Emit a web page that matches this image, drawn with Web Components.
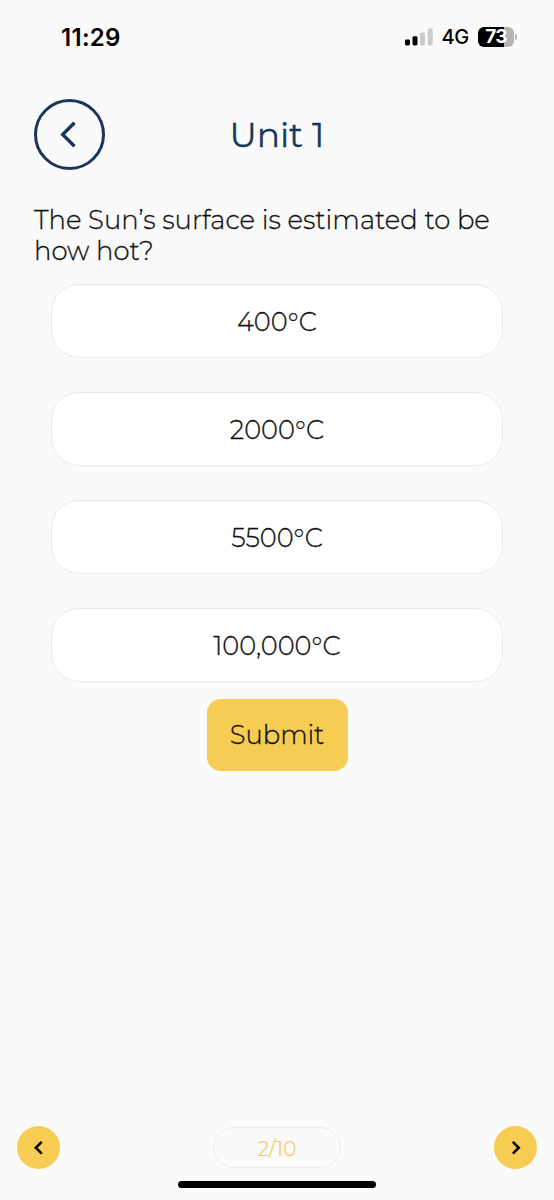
<!DOCTYPE html>
<html lang="en">
<head>
  <meta charset="utf-8">
  <meta name="viewport" content="width=device-width, initial-scale=1">
  <title>Unit 1</title>
  <style>
    body {
      margin: 0;
      background-color: #fafafa;
      font-family: Montserrat, Inter, "Open Sans", sans-serif;
    }
  </style>
</head>
<body>
  <quiz-screen></quiz-screen>

  <script>
    class StatusBar extends HTMLElement {
      constructor() {
        super();
        this.shadow = this.attachShadow({ mode: 'open' });
        this.shadow.innerHTML = `
          <style>
            :host {
              display: flex;
              align-items: center;
              justify-content: space-between;
              box-sizing: border-box;
              height: 74px;
              padding: 0 37px 0 61px;
              color: #000;
              font-family: Inter, "Open Sans", sans-serif;
            }
            .time {
              font-size: 24px;
              font-weight: 600;
              letter-spacing: 0.3px;
            }
            .right {
              display: flex;
              align-items: center;
            }
            .network {
              margin: 0 9px 0 9px;
              font-size: 20px;
              font-weight: 500;
              letter-spacing: -0.3px;
            }
            .battery {
              width: 36px;
              height: 20px;
              border-radius: 6px;
              background: linear-gradient(90deg, #000 73%, #b4b4b4 73%);
              color: #fff;
              font-size: 19px;
              font-weight: 700;
              line-height: 20px;
              letter-spacing: -0.8px;
              text-align: center;
            }
            .cap {
              width: 2px;
              height: 6px;
              margin-left: 1px;
              border-radius: 0 2px 2px 0;
              background-color: #b4b4b4;
            }
          </style>
          <span class="time">11:29</span>
          <div class="right">
            <svg width="28" height="18" viewBox="0 0 28 18">
              <rect x="0" y="11.5" width="5" height="6" rx="1.4"/>
              <rect x="7.5" y="8.3" width="5" height="9.2" rx="1.4"/>
              <rect x="15" y="4.5" width="5" height="13" rx="1.4" fill="#cbcbcb"/>
              <rect x="22.7" y="0.5" width="5" height="17" rx="1.4" fill="#cbcbcb"/>
            </svg>
            <span class="network">4G</span>
            <div class="battery">73</div>
            <div class="cap"></div>
          </div>`;
      }
    }

    // Round chevron button, size and colours come from custom properties
    class RoundButton extends HTMLElement {
      constructor() {
        super();
        this.shadow = this.attachShadow({ mode: 'open' });
      }

      connectedCallback() {
        const direction = this.getAttribute('direction');
        const points = direction === 'next' ? '1,1 8,8 1,15' : '8,1 1,8 8,15';
        this.shadow.innerHTML = `
          <style>
            :host { display: block; }
            button {
              display: flex;
              align-items: center;
              justify-content: center;
              width: var(--size, 43px);
              height: var(--size, 43px);
              padding: 0;
              border: var(--ring, none);
              border-radius: 50%;
              background-color: var(--fill, #f6cc52);
              color: var(--ink, #000);
            }
            svg {
              height: var(--chevron, 13.5px);
              margin-right: var(--nudge, 0);
              overflow: visible;
            }
            polyline {
              fill: none;
              stroke: currentColor;
              stroke-width: var(--stroke, 3);
            }
          </style>
          <button aria-label="${direction}">
            <svg viewBox="0 0 9 16"><polyline points="${points}"/></svg>
          </button>`;
      }
    }

    class AnswerOption extends HTMLElement {
      constructor() {
        super();
        this.shadow = this.attachShadow({ mode: 'open' });
        this.shadow.innerHTML = `
          <style>
            :host {
              display: flex;
              align-items: center;
              justify-content: center;
              box-sizing: border-box;
              height: 74px;
              border: 1.5px solid #eaeaea;
              border-radius: 28px;
              background-color: #fff;
              font-size: 25.7px;
              font-weight: 300;
              -webkit-text-stroke: 0.3px;
            }
          </style>
          <slot></slot>`;
      }
    }

    class QuizScreen extends HTMLElement {
      constructor() {
        super();
        this.shadow = this.attachShadow({ mode: 'open' });
        this.shadow.innerHTML = `
          <style>
            :host {
              display: flex;
              flex-direction: column;
              height: 1200px;
              color: #111;
            }
            header {
              display: grid;
              grid-template-columns: 71px 1fr 71px;
              align-items: center;
              margin-top: 25.4px;
              padding: 0 34px;
            }
            header round-button {
              --size: 71px;
              --ring: 3px solid #1b365d;
              --fill: transparent;
              --ink: #1b365d;
              --chevron: 27px;
              --stroke: 2;
              --nudge: 2px;
            }
            h1 {
              margin: 0;
              color: #1b365d;
              font-size: 34.5px;
              font-weight: 400;
              text-align: center;
              -webkit-text-stroke: 0.3px;
            }
            .question {
              margin: 35px 34px 0;
              font-size: 25.9px;
              font-weight: 300;
              line-height: 31px;
              -webkit-text-stroke: 0.3px;
            }
            .options {
              display: flex;
              flex-direction: column;
              gap: 34px;
              margin: 17px 51px 0;
            }
            .submit {
              align-self: center;
              width: 141px;
              height: 72px;
              margin-top: 17px;
              padding: 0 0 1px;
              border: none;
              border-radius: 14px;
              background-color: #f6cc52;
              color: #111;
              font-family: inherit;
              font-size: 25.8px;
              font-weight: 300;
              -webkit-text-stroke: 0.3px;
            }
            footer {
              display: flex;
              align-items: center;
              justify-content: space-between;
              margin-top: auto;
              padding: 0 17px;
            }
            .page {
              box-sizing: border-box;
              width: 128px;
              height: 41px;
              border: 1.5px solid #eaeaea;
              border-radius: 21px;
              color: #f0c95a;
              font-size: 20px;
              font-weight: 300;
              line-height: 42px;
              text-align: center;
              -webkit-text-stroke: 0.2px;
            }
            .home {
              width: 198px;
              height: 7px;
              margin: 12px auto;
              border-radius: 4px;
              background-color: #000;
            }
          </style>
          <status-bar></status-bar>
          <header>
            <round-button direction="back"></round-button>
            <h1>Unit 1</h1>
          </header>
          <div class="question">The Sun’s surface is estimated to be how hot?</div>
          <div class="options">
            <answer-option>400°C</answer-option>
            <answer-option>2000°C</answer-option>
            <answer-option>5500°C</answer-option>
            <answer-option>100,000°C</answer-option>
          </div>
          <button class="submit">Submit</button>
          <footer>
            <round-button direction="back"></round-button>
            <div class="page">2/10</div>
            <round-button direction="next"></round-button>
          </footer>
          <div class="home"></div>`;
      }
    }

    customElements.define('status-bar', StatusBar);
    customElements.define('round-button', RoundButton);
    customElements.define('answer-option', AnswerOption);
    customElements.define('quiz-screen', QuizScreen);
  </script>
</body>
</html>
